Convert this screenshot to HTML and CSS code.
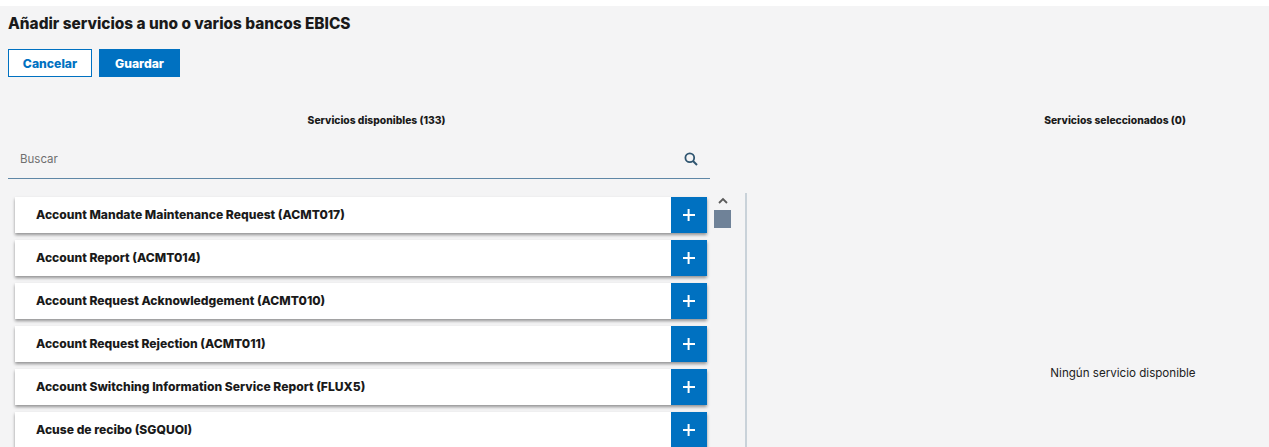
FILE: index.html
```html
<!DOCTYPE html>
<html lang="es">
<head>
<meta charset="utf-8">
<title>Añadir servicios</title>
<link rel="stylesheet" href="styles.css">
</head>
<body>
<svg class="defs" width="0" height="0"><defs><path id="plus" d="M0 5h12v2H0zM4.6 0h2v12h-2z" fill="#fff"/></defs></svg>
<main class="page">
  <h1 class="title">Añadir servicios a uno o varios bancos EBICS</h1>
  <div class="actions">
    <button class="btn btn-outline">Cancelar</button>
    <button class="btn btn-solid">Guardar</button>
  </div>
  <div class="columns">
    <section class="left">
      <h2 class="heading">Servicios disponibles (133)</h2>
      <div class="search">
        <span class="placeholder">Buscar</span>
        <svg class="search-icon" width="14" height="14" viewBox="0 0 14 14"><circle cx="5.8" cy="5.8" r="4.4" fill="none" stroke="#2f5570" stroke-width="1.8"/><path d="M9 9l4 4" stroke="#2f5570" stroke-width="2" fill="none"/></svg>
      </div>
      <div class="list-wrap">
        <ul class="list">
          <li class="item"><span class="name">Account Mandate Maintenance Request (ACMT017)</span><span class="add"><svg width="12" height="12" viewBox="0 0 12 12"><use href="#plus"/></svg></span></li>
          <li class="item"><span class="name">Account Report (ACMT014)</span><span class="add"><svg width="12" height="12" viewBox="0 0 12 12"><use href="#plus"/></svg></span></li>
          <li class="item"><span class="name">Account Request Acknowledgement (ACMT010)</span><span class="add"><svg width="12" height="12" viewBox="0 0 12 12"><use href="#plus"/></svg></span></li>
          <li class="item"><span class="name">Account Request Rejection (ACMT011)</span><span class="add"><svg width="12" height="12" viewBox="0 0 12 12"><use href="#plus"/></svg></span></li>
          <li class="item"><span class="name">Account Switching Information Service Report (FLUX5)</span><span class="add"><svg width="12" height="12" viewBox="0 0 12 12"><use href="#plus"/></svg></span></li>
          <li class="item"><span class="name">Acuse de recibo (SGQUOI)</span><span class="add"><svg width="12" height="12" viewBox="0 0 12 12"><use href="#plus"/></svg></span></li>
        </ul>
        <div class="scrollbar">
          <svg class="arrow" width="10" height="7" viewBox="0 0 10 7"><path d="M1 6l4-4 4 4" fill="none" stroke="#5b5b5b" stroke-width="1.8"/></svg>
          <div class="thumb"></div>
        </div>
      </div>
    </section>
    <section class="right">
      <h2 class="heading">Servicios seleccionados (0)</h2>
      <div class="empty">Ningún servicio disponible</div>
    </section>
  </div>
</main>
</body>
</html>
```
FILE: styles.css
```css
* { box-sizing: border-box; }
html, body { margin: 0; height: 447px; overflow: hidden; background: #fff; }
body { padding-top: 6px; font-family: Inter, Roboto, sans-serif; color: #1a1a1a; }
.defs { position: absolute; }
.page { background: #f4f4f5; height: 441px; padding: 0 0 0 8px; overflow: hidden; }
.title { margin: 0; padding-top: 8px; font-size: 15.4px; line-height: 19px; font-weight: 800; }
.actions { display: flex; gap: 7px; margin-top: 16px; }
.btn { height: 28px; font: 800 12.2px Inter, Roboto, sans-serif; border: 1px solid #0071c1; padding: 0; }
.btn-outline { width: 84px; background: #fff; color: #0071c1; }
.btn-solid { width: 81px; background: #0071c1; color: #fff; }
.columns { display: flex; margin-top: 36px; }
.left { width: 739px; flex: none; }
.right { flex: 1; min-width: 0; padding-right: 8px; }
.heading { margin: 0; font-size: 10.3px; line-height: 14px; font-weight: 800; text-align: center; }
.left .heading { width: 737px; }
.right .heading { width: 736px; }
.search { width: 702px; height: 40px; margin-top: 12px; border-bottom: 1px solid #5f87a6; display: flex; align-items: center; justify-content: space-between; padding: 0 12px 0 12px; }
.placeholder { font-size: 11.5px; color: #6f6f6f; }
.list-wrap { display: flex; margin-top: 14px; border-right: 2px solid #c9d2d9; height: 260px; }
.list { list-style: none; margin: 4px 0 0 7px; padding: 0; width: 692px; flex: none; }
.item { display: flex; height: 36px; margin-bottom: 7px; background: #fff; box-shadow: 0 2px 3px rgba(0,0,0,.4); align-items: center; }
.name { flex: 1; padding: 0 0 2px 21px; font-size: 12.1px; font-weight: 800; }
.add { width: 36px; height: 36px; background: #0071c1; display: flex; align-items: center; justify-content: center; }
.scrollbar { width: 17px; margin-left: 7px; display: flex; flex-direction: column; align-items: center; padding-top: 4px; }
.arrow { display: block; }
.thumb { width: 17px; height: 18px; margin-top: 6px; background: #6f8298; }
.empty { margin-top: 238px; width: 752px; text-align: center; font-size: 11.6px; line-height: 16px; color: #222; }
```
